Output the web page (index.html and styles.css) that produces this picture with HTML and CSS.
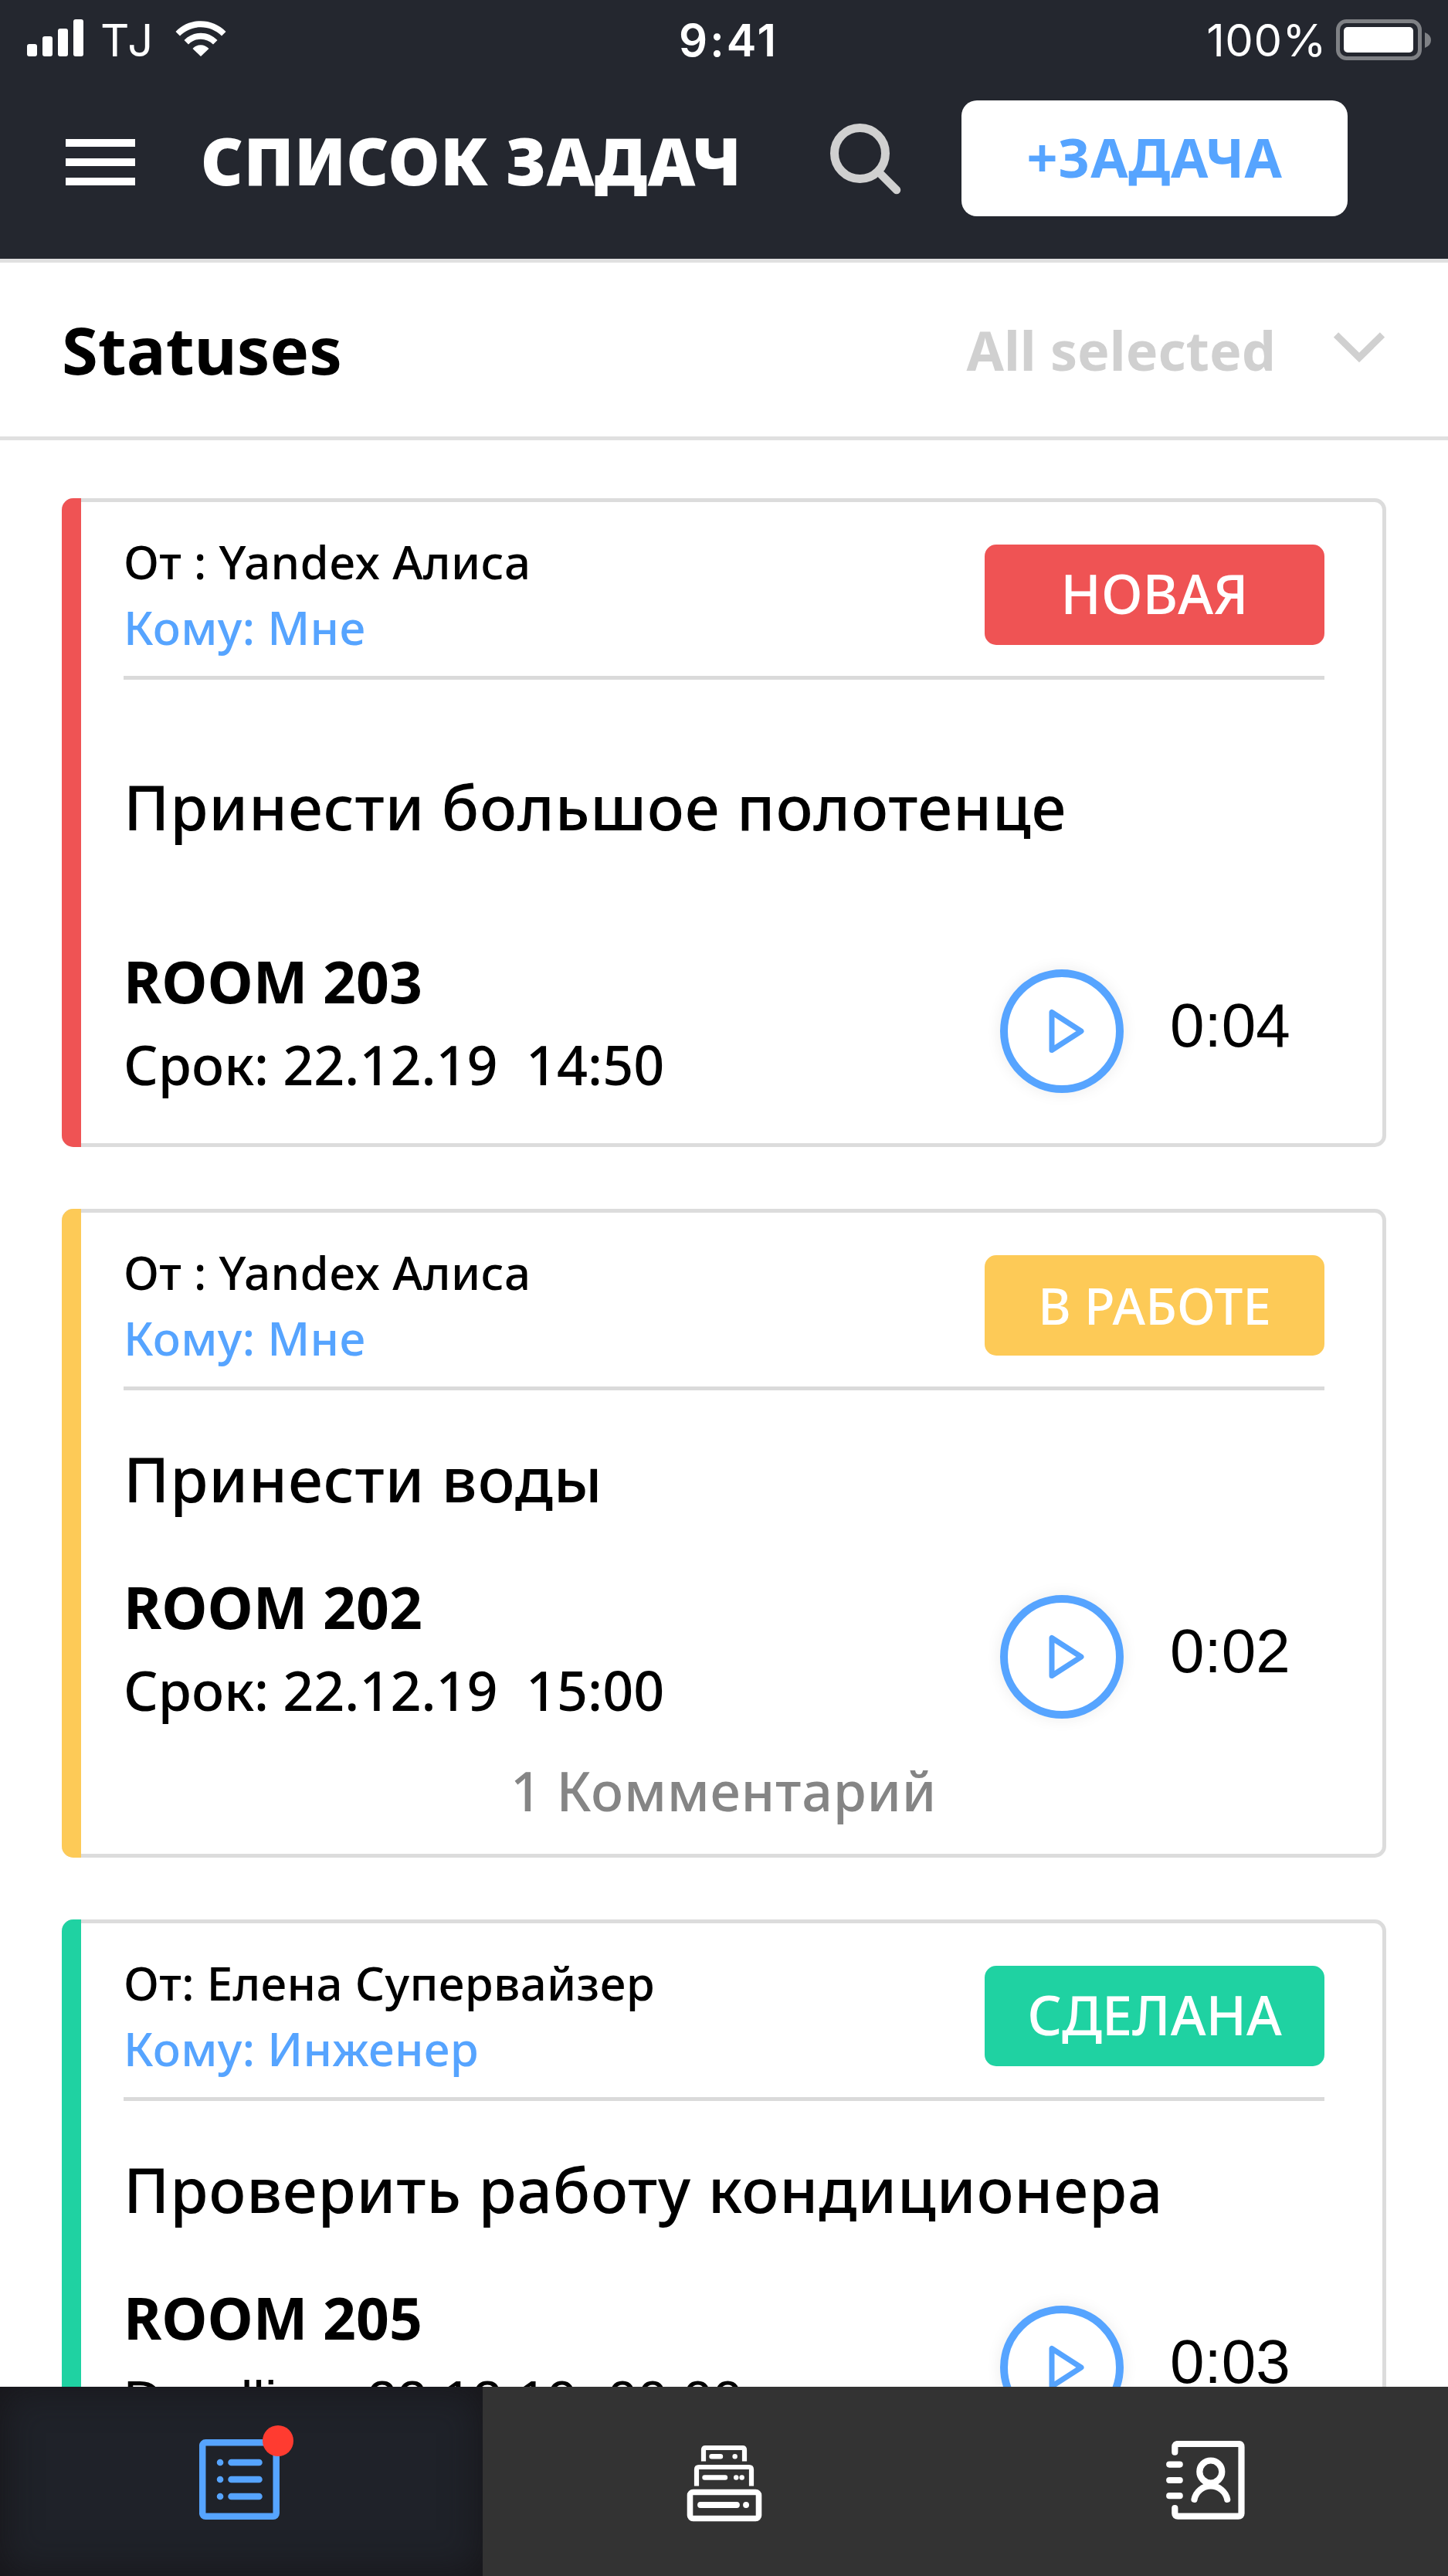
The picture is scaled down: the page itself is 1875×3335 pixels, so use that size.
FILE: index.html
```
<!DOCTYPE html>
<html lang="ru">

<head>
  <meta charset="UTF-8">
  <meta name="viewport" content="width=device-width, initial-scale=1.0">
  <title>Список задач</title>
  <link rel="stylesheet" href="styles.css">
</head>

<body>
  <div class="app">
    <header class="header">
      <div class="status-bar">
        <div class="status-left">
          <svg class="signal" width="74" height="48" viewBox="0 0 74 48" fill="#fff">
            <rect x="0" y="32" width="13" height="16" rx="3" />
            <rect x="20" y="22" width="13" height="26" rx="3" />
            <rect x="40" y="12" width="13" height="36" rx="3" />
            <rect x="60" y="0" width="13" height="48" rx="3" />
          </svg>
          <span class="carrier">TJ</span>
          <svg class="wifi" width="66" height="46" viewBox="0 0 66 46" fill="#fff">
            <path d="M0.5 14C18-4.500 48-4.500 65.500 14L60 19.500C45 4.500 21 4.500 6 19.500Z" />
            <path d="M11.500 25C23.500 12.500 42.500 12.500 54.500 25L49 30.500C40 21.500 26 21.500 17 30.500Z" />
            <path d="M22.500 36C28.500 29.500 37.500 29.500 43.500 36L33 46Z" />
          </svg>
        </div>
        <div class="clock">9:41</div>
        <div class="status-right">
          <span class="percent">100%</span>
          <svg class="battery" width="124" height="54" viewBox="0 0 124 54">
            <rect x="2.500" y="2.500" width="106" height="48" rx="11" fill="none" stroke="#7f8185" stroke-width="5" />
            <rect x="10" y="10" width="90" height="33" rx="5" fill="#fff" />
            <path d="M115 17Q123 20 123 27T115 37Z" fill="#7f8185" />
          </svg>
        </div>
      </div>
      <div class="toolbar">
        <svg class="menu" width="90" height="60" viewBox="0 0 90 60" fill="#fff">
          <rect width="90" height="10" />
          <rect y="25" width="90" height="10" />
          <rect y="50" width="90" height="10" />
        </svg>
        <h1>СПИСОК ЗАДАЧ</h1>
        <svg class="search" width="92" height="92" viewBox="0 0 92 92" fill="none" stroke="#d0d0d0">
          <circle cx="38.500" cy="38.500" r="33" stroke-width="11" />
          <path d="M64 64L86 86" stroke-width="10.500" stroke-linecap="round" />
        </svg>
        <button type="button" class="add-task">+ЗАДАЧА</button>
      </div>
    </header>

    <div class="filter">
      <h2>Statuses</h2>
      <span class="selected">All selected</span>
      <svg class="chevron" width="66" height="40" viewBox="0 0 66 40" fill="none" stroke="#d0d0d0" stroke-width="9">
        <path d="M3 3.500L33 33L63 3.500" />
      </svg>
    </div>

    <main class="tasks">
      <div class="card new">
        <div class="card-head">
          <div class="people">
            <div>От : Yandex Алиса</div>
            <div class="to">Кому: Мне</div>
          </div>
          <div class="badge">НОВАЯ</div>
        </div>
        <div class="card-title">Принести большое полотенце</div>
        <div class="card-info">
          <div class="place">
            <div class="room">ROOM 203</div>
            <div class="term">Срок: 22.12.19&nbsp; 14:50</div>
          </div>
          <div class="play">
            <svg width="48" height="60" viewBox="0 0 48 60"><path d="M5 5.500V54.500L43 30Z" /></svg>
          </div>
          <div class="length">0:04</div>
        </div>
      </div>

      <div class="card work">
        <div class="card-head">
          <div class="people">
            <div>От : Yandex Алиса</div>
            <div class="to">Кому: Мне</div>
          </div>
          <div class="badge small">В РАБОТЕ</div>
        </div>
        <div class="card-title">Принести воды</div>
        <div class="card-info">
          <div class="place">
            <div class="room">ROOM 202</div>
            <div class="term">Срок: 22.12.19&nbsp; 15:00</div>
          </div>
          <div class="play">
            <svg width="48" height="60" viewBox="0 0 48 60"><path d="M5 5.500V54.500L43 30Z" /></svg>
          </div>
          <div class="length">0:02</div>
        </div>
        <div class="comments">1 Комментарий</div>
      </div>

      <div class="card done">
        <div class="card-head">
          <div class="people">
            <div>От: Елена Супервайзер</div>
            <div class="to">Кому: Инженер</div>
          </div>
          <div class="badge">СДЕЛАНА</div>
        </div>
        <div class="card-title">Проверить работу кондиционера</div>
        <div class="card-info">
          <div class="place">
            <div class="room">ROOM 205</div>
            <div class="term deadline">Deadline: 22.12.19&nbsp; 00:00</div>
          </div>
          <div class="play">
            <svg width="48" height="60" viewBox="0 0 48 60"><path d="M5 5.500V54.500L43 30Z" /></svg>
          </div>
          <div class="length">0:03</div>
        </div>
      </div>
    </main>

    <nav class="tabs">
      <div class="tab active">
        <svg width="124" height="124" viewBox="0 0 124 124" fill="none" stroke="#56a4ff" stroke-width="8.500">
          <rect x="4.200" y="22.300" width="95.500" height="95.500" rx="4" />
          <g stroke-linecap="round">
            <path d="M27 48h.1M27 70h.1M27 92h.1M41.500 48h36M41.500 70h36M41.500 92h36" />
          </g>
          <circle cx="102" cy="20" r="20" fill="#ff3b30" stroke="none" />
        </svg>
      </div>
      <div class="tab">
        <svg class="archive" width="98" height="100" viewBox="0 0 98 100" fill="none" stroke="#fff">
          <path d="M22 21.500V6.500Q22 4 24.500 4H72.500Q75 4 75 6.500V21.500M13 53.500V32Q13 29 16 29H81Q84 29 84 32V53.500" stroke-width="6.200" />
          <rect x="4.500" y="61.500" width="89" height="34" rx="4" stroke-width="7.600" />
          <g stroke-linecap="round" stroke-width="6.400">
            <path d="M32.500 15.200h11.500M62.600 15.200h.1M23.500 42.500h26.500M64.200 42.500h.1M71.600 42.500h.1" />
            <path d="M18 78h47M77 78h.1" stroke-width="7.800" />
          </g>
        </svg>
      </div>
      <div class="tab">
        <svg class="contacts" width="102" height="102" viewBox="0 0 102 102" fill="none" stroke="#fff" stroke-width="8.200" stroke-linecap="round">
          <path d="M11.300 14.700V8Q11.300 4 15.300 4H93.500Q97.500 4 97.500 8V94Q97.500 97.700 93.500 97.700H15.300Q11.300 97.700 11.300 94V87" />
          <path d="M4.200 30.600h13.500M4.200 51h13.500M4.200 71.200h13.500" />
          <circle cx="57.800" cy="40" r="14.500" />
          <path d="M36.500 75.800A21.800 21.800 0 0 1 79.200 75.800" />
        </svg>
      </div>
    </nav>
  </div>
</body>

</html>
```
FILE: styles.css
```
html,
body {
  margin: 0;
  padding: 0;
}

body {
  font-family: "Noto Sans", "Open Sans", sans-serif;
  background-color: #fff;
  color: #000;
}

svg {
  display: block;
  flex-shrink: 0;
}

.app {
  width: 1875px;
  height: 3335px;
  display: flex;
  flex-direction: column;
  overflow: hidden;
}

/* header */
.header {
  height: 335px;
  flex-shrink: 0;
  background-color: #24272f;
  border-bottom: 5px solid #e0e0e0;
  color: #fff;
}

.status-bar {
  height: 100px;
  padding: 0 21px 0 35px;
  display: grid;
  grid-template-columns: 1fr auto 1fr;
  font-family: Inter, Roboto, sans-serif;
  font-size: 58px;
  line-height: 104px;
}

.status-left,
.status-right {
  display: flex;
}

.status-right {
  justify-content: flex-end;
}

.signal {
  margin-top: 25px;
}

.carrier {
  margin-left: 21px;
  width: 97px;
  letter-spacing: 3px;
}

.wifi {
  margin-top: 27px;
}

.clock {
  margin-right: 2px;
  font-weight: 600;
  letter-spacing: 3px;
}

.percent {
  margin-right: 12px;
  letter-spacing: .5px;
}

.battery {
  margin-top: 25px;
}

.toolbar {
  display: flex;
  padding: 30px 130px 0 85px;
}

.menu {
  margin-top: 50px;
}

h1 {
  margin: 0 0 0 85px;
  width: 815px;
  font-size: 85px;
  line-height: 155px;
  font-weight: 900;
  letter-spacing: .7px;
  white-space: nowrap;
}

.search {
  margin-top: 30px;
}

.add-task {
  width: 500px;
  height: 150px;
  margin-left: auto;
  padding: 0 0 4px;
  border: none;
  border-radius: 20px;
  background-color: #fff;
  color: #56a4ff;
  font: bold 70px "Noto Sans", sans-serif;
  letter-spacing: .5px;
}

/* status filter */
.filter {
  height: 225px;
  flex-shrink: 0;
  padding: 0 82px 0 80px;
  display: flex;
  border-bottom: 5px solid #e0e0e0;
}

h2 {
  margin: 0 auto 0 0;
  font-size: 85px;
  line-height: 225px;
}

.selected {
  margin-right: 75px;
  font-size: 70px;
  font-weight: bold;
  line-height: 226px;
  color: #d0d0d0;
}

.chevron {
  margin-top: 90px;
}

/* task cards */
.tasks {
  flex: 1;
  min-height: 0;
  padding: 75px 80px 0;
  display: flex;
  flex-direction: column;
  gap: 80px;
  overflow: hidden;
}

.card {
  height: 840px;
  flex-shrink: 0;
  box-sizing: border-box;
  padding: 0 75px 0 80px;
  border: 5px solid #dcdcdc;
  border-left: none;
  border-radius: 15px;
  position: relative;
}

/* colored stripe over the card's left edge */
.card::before {
  content: "";
  position: absolute;
  left: 0;
  top: -5px;
  bottom: -5px;
  width: 25px;
  border-radius: 15px 0 0 15px;
  background-color: var(--status);
}

.new {
  --status: #ef5354;
}

.work {
  --status: #fdca57;
}

.done {
  --status: #1fd2a2;
}

.card-head {
  height: 225px;
  display: flex;
  justify-content: space-between;
  border-bottom: 5px solid #dadada;
}

.people {
  padding-top: 35px;
  font-size: 60px;
  font-weight: 550;
  letter-spacing: .3px;
  line-height: 85px;
}

.to {
  color: #56a4ff;
}

.badge {
  width: 440px;
  height: 130px;
  margin-top: 55px;
  border-radius: 15px;
  background-color: var(--status);
  color: #fff;
  font-size: 70px;
  font-weight: 500;
  line-height: 127px;
  text-align: center;
}

.badge.small {
  font-size: 65px;
  letter-spacing: .2px;
  line-height: 131px;
}

.card-title {
  height: 146px;
  padding-top: 34px;
  font-size: 80px;
  font-weight: 550;
  letter-spacing: .8px;
  line-height: 160px;
  white-space: nowrap;
}

.new .card-title {
  padding: 84px 0 60px;
}

.card-info {
  display: flex;
}

.place {
  width: 1135px;
  margin-top: 45px;
  white-space: nowrap;
}

.room {
  font-size: 75px;
  font-weight: bold;
  line-height: 110px;
}

.term {
  font-size: 70px;
  font-weight: 530;
  line-height: 106px;
}

.deadline,
.length {
  font-family: "Liberation Sans", Arial, sans-serif;
  font-weight: normal;
}

.play {
  width: 140px;
  height: 140px;
  margin-top: 85px;
  border: 10px solid #56a4ff;
  border-radius: 50%;
  box-shadow: 0 0 20px rgba(0, 0, 0, .08);
  display: flex;
  align-items: center;
  justify-content: center;
}

.play svg {
  margin-left: 12px;
  fill: none;
  stroke: #56a4ff;
  stroke-width: 7;
  stroke-linejoin: round;
}

.length {
  margin: 85px 0 0 60px;
  font-size: 80px;
  line-height: 145px;
}

.comments {
  margin: 27px 0 0 -80px;
  padding-left: 79px;
  font-size: 70px;
  font-weight: 550;
  letter-spacing: .7px;
  line-height: 100px;
  text-align: center;
  color: #858585;
}

/* bottom navigation */
.tabs {
  height: 245px;
  flex-shrink: 0;
  display: grid;
  grid-template-columns: repeat(3, 1fr);
  background-color: #333;
}

.tab.active {
  padding: 50px 0 0 258px;
  background-color: #1f2229;
  box-shadow: inset 0 0 50px rgba(20, 18, 20, .8);
}

.archive {
  margin: 75px 0 0 264px;
}

.contacts {
  margin: 70px 0 0 260px;
}
```
